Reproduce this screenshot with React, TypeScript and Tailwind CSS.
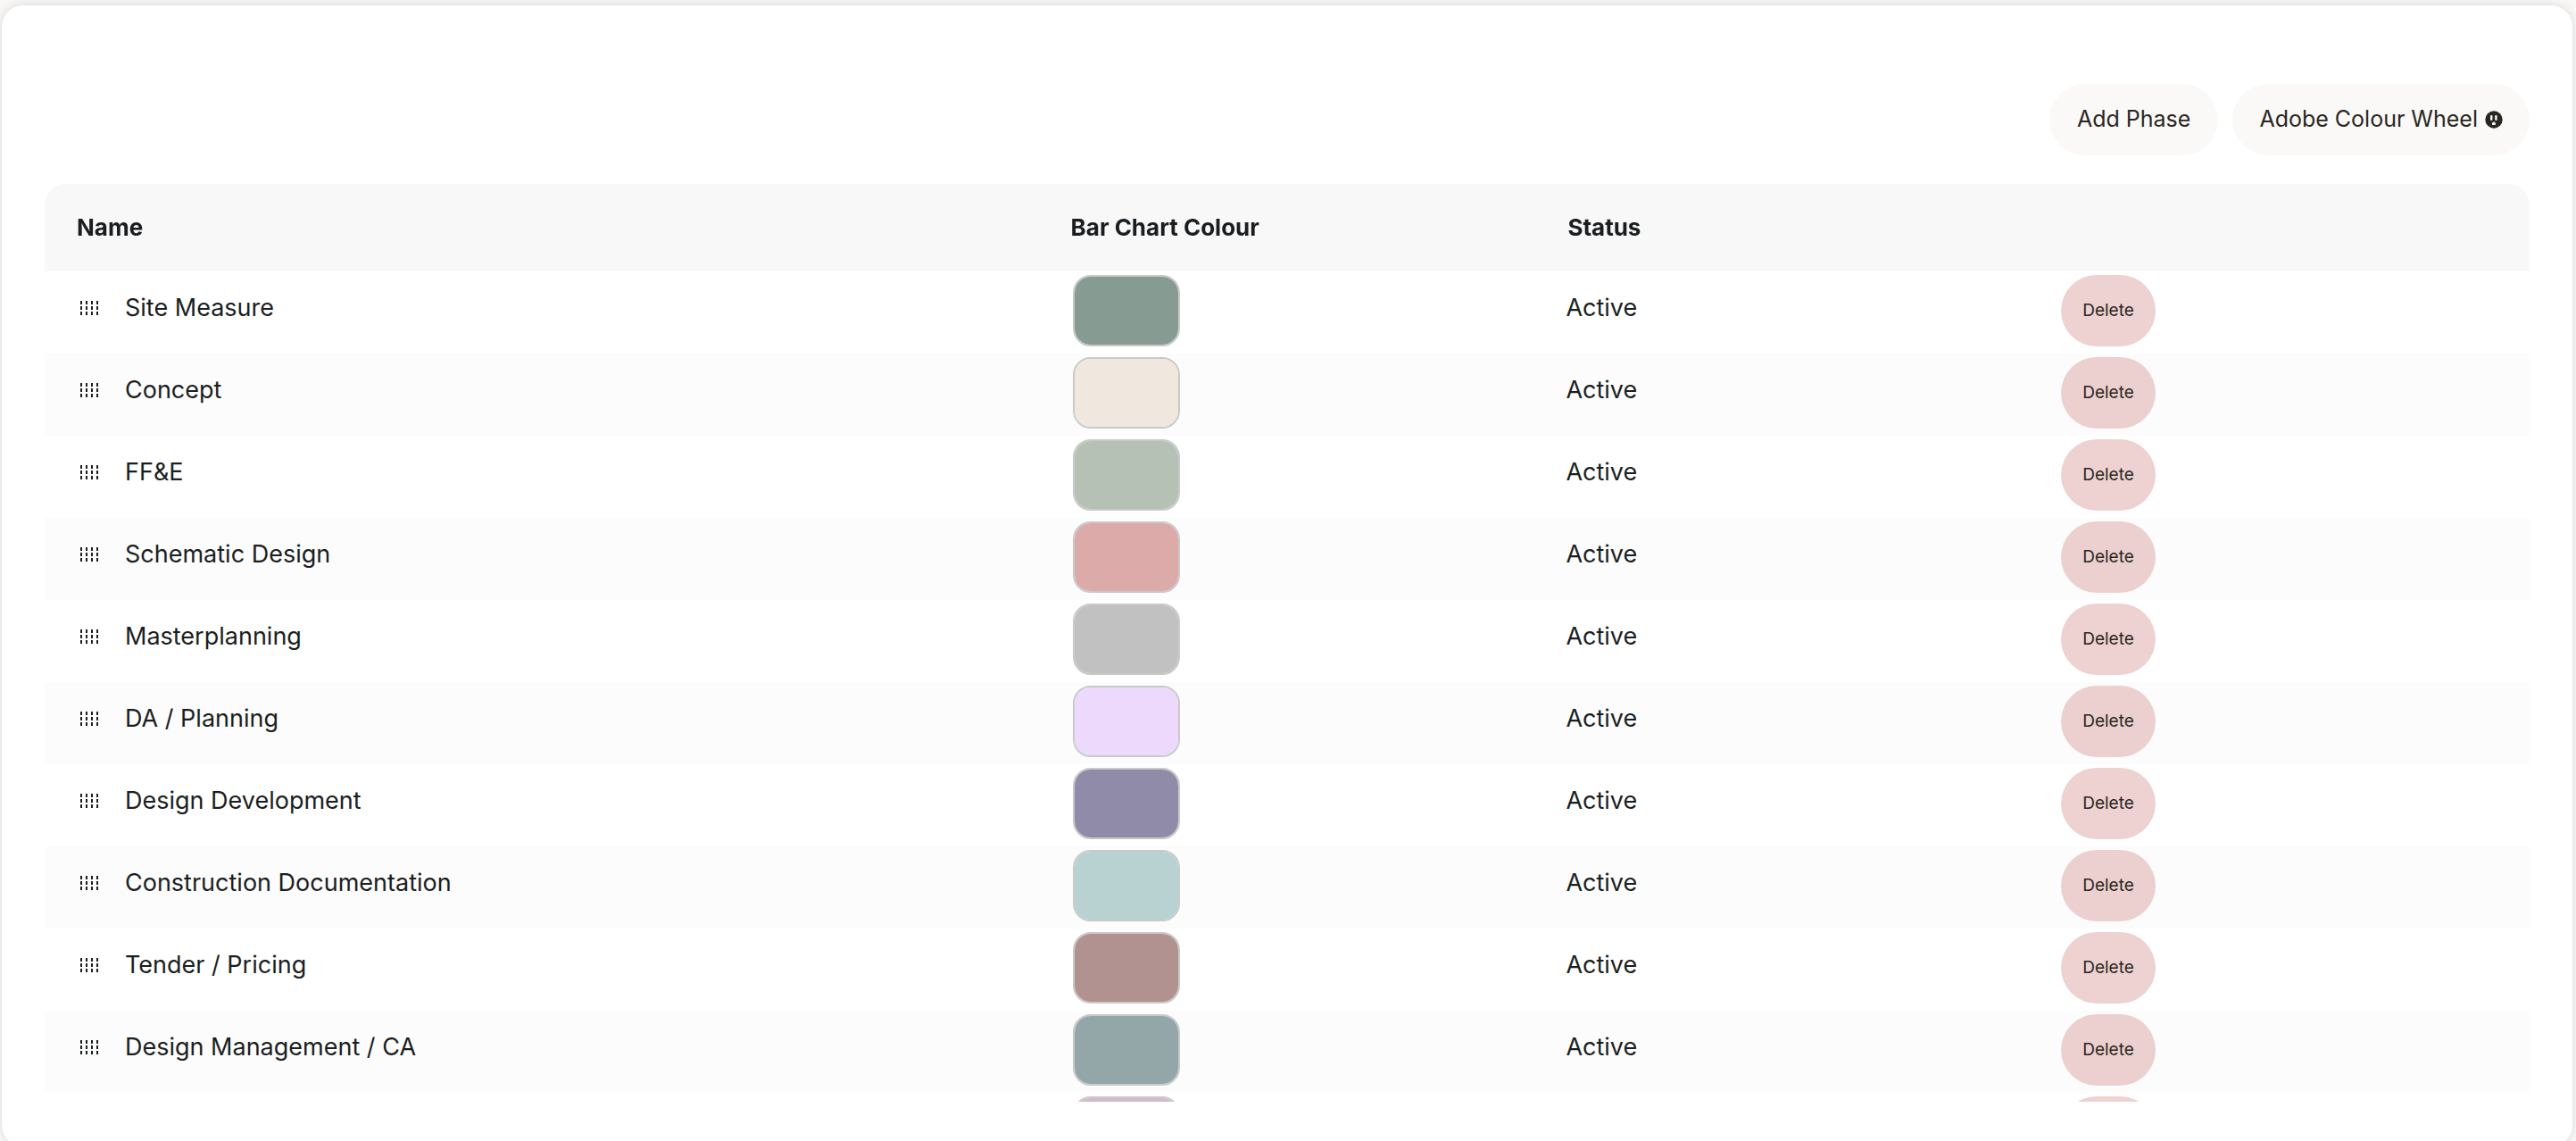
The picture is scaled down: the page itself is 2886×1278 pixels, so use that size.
import React, { useState } from 'react';

interface Phase {
  id: number;
  name: string;
  colour: string;
  status: string;
}

const initialPhases: Phase[] = [
  { id: 1, name: 'Site Measure', colour: '#869c93', status: 'Active' },
  { id: 2, name: 'Concept', colour: '#f0e7de', status: 'Active' },
  { id: 3, name: 'FF&E', colour: '#b5c1b4', status: 'Active' },
  { id: 4, name: 'Schematic Design', colour: '#dcaaa9', status: 'Active' },
  { id: 5, name: 'Masterplanning', colour: '#c1c1c1', status: 'Active' },
  { id: 6, name: 'DA / Planning', colour: '#ecd9fc', status: 'Active' },
  { id: 7, name: 'Design Development', colour: '#8f8ba8', status: 'Active' },
  { id: 8, name: 'Construction Documentation', colour: '#b8d1d1', status: 'Active' },
  { id: 9, name: 'Tender / Pricing', colour: '#b29290', status: 'Active' },
  { id: 10, name: 'Design Management / CA', colour: '#93a7a9', status: 'Active' },
  { id: 11, name: '', colour: '#d0bdc9', status: '' },
];

const DragHandle: React.FC = () => (
  <svg width="20" height="16" viewBox="0 0 20 16" fill="currentColor" shapeRendering="crispEdges" aria-hidden="true">
    {[0, 6, 12].map((y) =>
      [0, 6, 12, 18].map((x) => <rect key={`${x}-${y}`} x={x} y={y} width="2" height="4" />)
    )}
  </svg>
);

const OutletIcon: React.FC = () => (
  <svg width="20" height="20" viewBox="0 0 20 20" aria-hidden="true">
    <circle cx="10" cy="10" r="9.7" fill="#2a2722" />
    <rect x="6" y="5" width="2.4" height="6" rx="1.2" fill="#faf9f7" />
    <rect x="11.2" y="5" width="2.4" height="6" rx="1.2" fill="#faf9f7" />
    <path d="M8 16v-1.6a1.9 1.9 0 0 1 3.8 0V16z" fill="#faf9f7" />
  </svg>
);

const PhaseRow: React.FC<{ phase: Phase; onColour: (colour: string) => void; onDelete: () => void }> = ({
  phase,
  onColour,
  onDelete,
}) => (
  <tr className="h-[92px] bg-white even:bg-[#fcfcfc]">
    <td className="pt-5 pl-10 align-top">
      <div className="flex items-center gap-[30px]">
        <button type="button" aria-label={`Move ${phase.name}`} className="cursor-grab">
          <DragHandle />
        </button>
        <span>{phase.name}</span>
      </div>
    </td>
    <td className="pt-1 pl-[38px] align-top">
      <input
        type="color"
        aria-label={`${phase.name} colour`}
        value={phase.colour}
        onChange={(e) => onColour(e.target.value)}
        className="block h-20 w-[120px] cursor-pointer appearance-none overflow-hidden rounded-[20px] border-2 border-[#c9c9c9] p-0 [&::-webkit-color-swatch]:rounded-none [&::-webkit-color-swatch]:border-none [&::-webkit-color-swatch-wrapper]:p-0"
      />
    </td>
    <td className="pt-5 pl-[34px] align-top">{phase.status}</td>
    <td className="pt-1 pl-8 align-top">
      <button
        type="button"
        onClick={onDelete}
        className="h-20 rounded-[40px] bg-[#d99a9a]/45 px-6 text-[19px] text-[#2a2722]"
      >
        Delete
      </button>
    </td>
  </tr>
);

export default function App() {
  const [phases, setPhases] = useState(initialPhases);

  const setColour = (id: number, colour: string) =>
    setPhases(phases.map((p) => (p.id === id ? { ...p, colour } : p)));

  return (
    <div className="h-screen overflow-hidden bg-[#f8f7f5] pt-1.5 pr-1 pl-0.5 font-['Inter','Liberation_Sans',sans-serif] text-[#1a1e21]">
      <main className="flex h-screen flex-col rounded-3xl bg-white px-12 pt-[88px] pb-[50px] shadow-[0_0_12px_rgba(0,0,0,0.12)]">
        {/* Actions */}
        <div className="flex justify-end gap-4 text-[25px] text-[#2a2722]">
          <button type="button" className="h-20 rounded-[40px] bg-[#faf9f7] px-[31px]">
            Add Phase
          </button>
          <a
            href="#colour-wheel"
            className="flex h-20 items-center gap-2 rounded-[40px] bg-[#faf9f7] px-[30px]"
          >
            Adobe Colour Wheel
            <OutletIcon />
          </a>
        </div>

        {/* Phases */}
        <div className="mt-8 min-h-0 flex-1 overflow-y-auto rounded-t-3xl [scrollbar-width:none]">
          <table className="w-full table-fixed text-left text-[27px] leading-[42px]">
            <thead className="sticky top-0 z-10">
              <tr className="h-[98px] bg-[#f8f8f8] text-[26px]">
                <th className="w-2/5 p-0 pl-9 font-bold">Name</th>
                <th className="w-1/5 p-0 pl-9 font-bold">Bar Chart Colour</th>
                <th className="w-1/5 p-0 pl-9 font-bold">Status</th>
                <th className="w-1/5" aria-label="Actions" />
              </tr>
            </thead>
            <tbody>
              {phases.map((phase) => (
                <PhaseRow
                  key={phase.id}
                  phase={phase}
                  onColour={(colour) => setColour(phase.id, colour)}
                  onDelete={() => setPhases(phases.filter((p) => p.id !== phase.id))}
                />
              ))}
            </tbody>
          </table>
        </div>
      </main>
    </div>
  );
}
